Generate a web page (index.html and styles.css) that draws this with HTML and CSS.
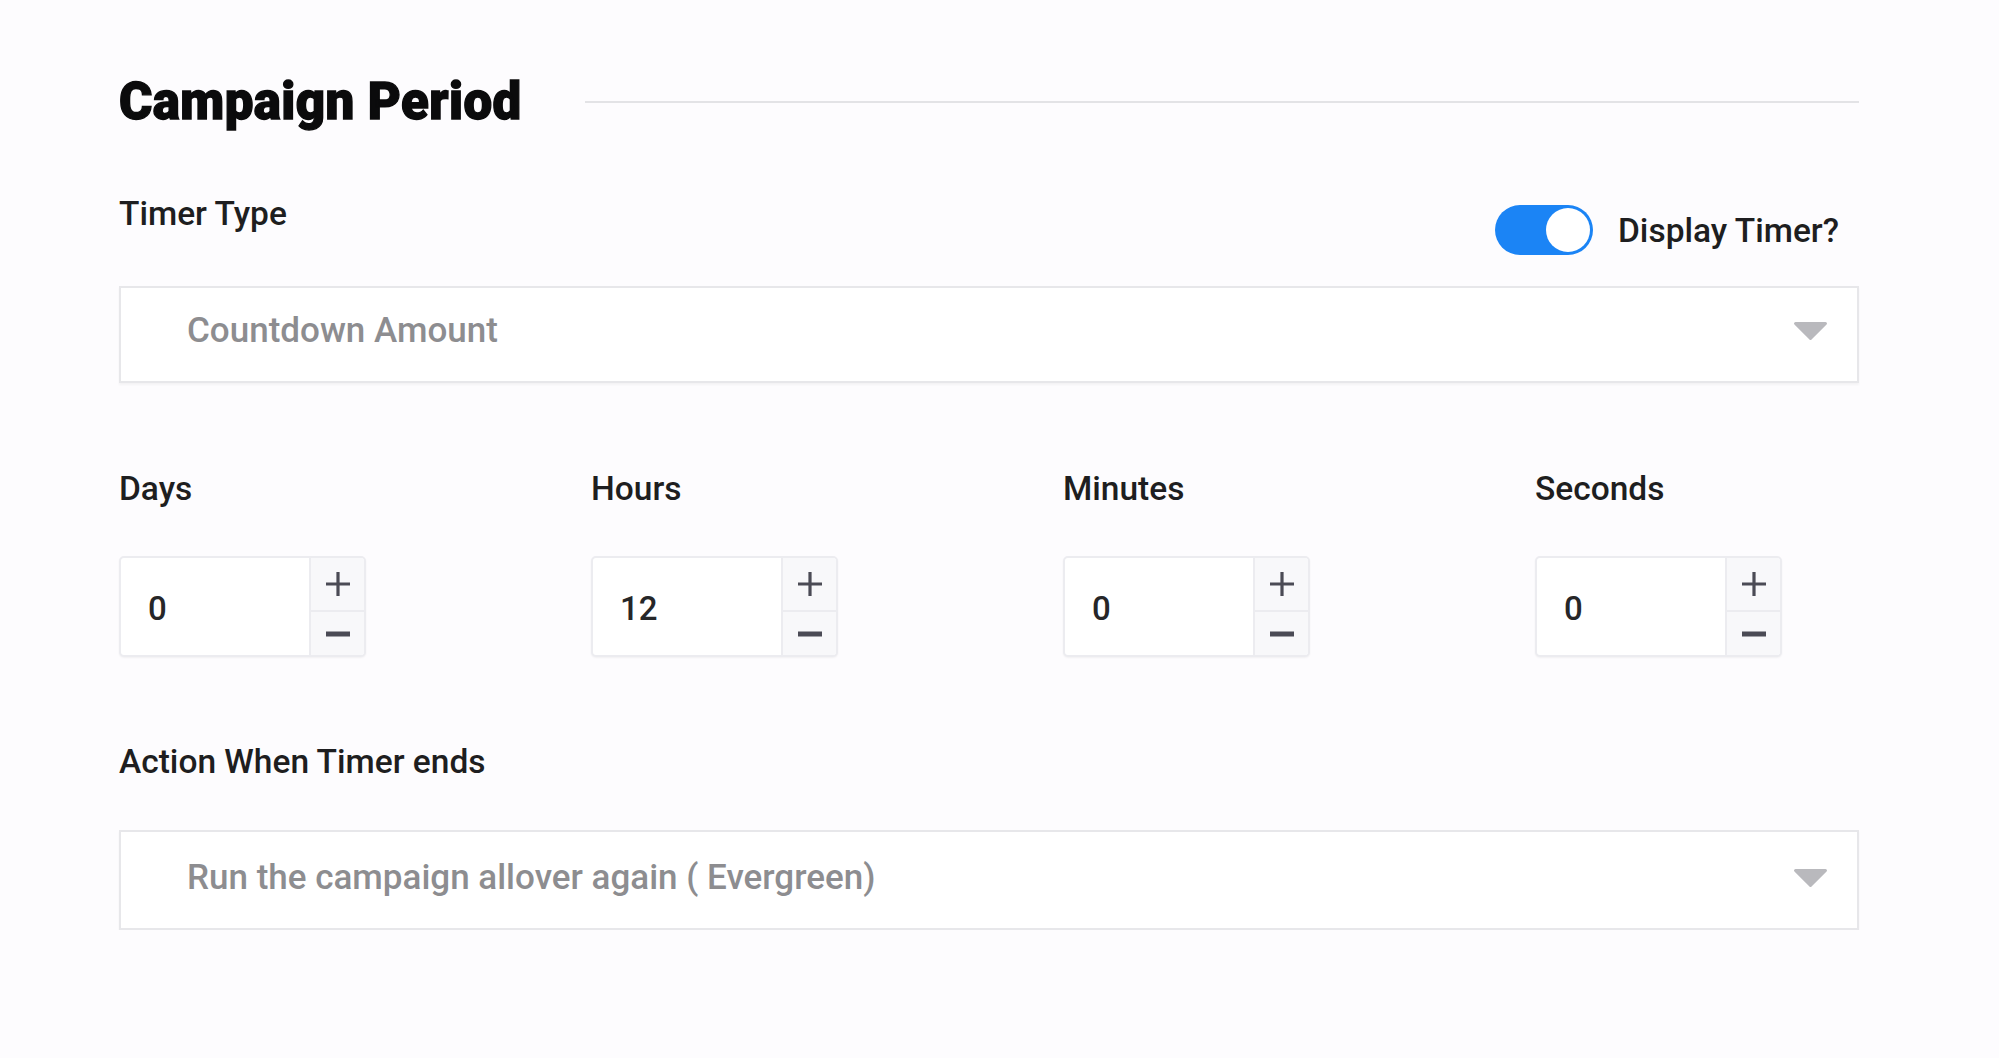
FILE: index.html
```html
<!DOCTYPE html>
<html lang="en">
<head>
    <meta charset="UTF-8">
    <meta name="viewport" content="width=device-width, initial-scale=1.0">
    <title>Campaign Period</title>
    <link rel="stylesheet" href="styles.css">
</head>
<body>
    <div class="campaign-section">
        <div class="section-header">
            <h2>Campaign Period</h2>
            <span class="header-line"></span>
        </div>

        <div class="timer-type-row">
            <label class="field-label">Timer Type</label>
            <label class="display-toggle">
                <span class="switch">
                    <input type="checkbox" checked>
                    <span class="slider"></span>
                </span>
                Display Timer?
            </label>
        </div>
        <div class="select-box">
            <span>Countdown Amount</span>
            <svg class="select-arrow" width="35" height="20" viewBox="0 0 35 20">
                <path d="M2.5 2.5 H32.5 L17.5 17.5 Z" fill="#b9b9bd" stroke="#b9b9bd" stroke-width="3" stroke-linejoin="round"/>
            </svg>
        </div>

        <div class="duration-grid">
            <div class="duration-field">
                <label class="field-label">Days</label>
                <div class="stepper">
                    <input type="text" value="0">
                    <div class="stepper-buttons">
                        <button type="button" class="step-up">
                            <svg width="26" height="26" viewBox="0 0 26 26"><path d="M13 1 V25 M1 13 H25" stroke="#4b4b55" stroke-width="3.2"/></svg>
                        </button>
                        <button type="button" class="step-down">
                            <svg width="26" height="8" viewBox="0 0 26 8"><path d="M1 4 H25" stroke="#4b4b55" stroke-width="5"/></svg>
                        </button>
                    </div>
                </div>
            </div>
            <div class="duration-field">
                <label class="field-label">Hours</label>
                <div class="stepper">
                    <input type="text" value="12">
                    <div class="stepper-buttons">
                        <button type="button" class="step-up">
                            <svg width="26" height="26" viewBox="0 0 26 26"><path d="M13 1 V25 M1 13 H25" stroke="#4b4b55" stroke-width="3.2"/></svg>
                        </button>
                        <button type="button" class="step-down">
                            <svg width="26" height="8" viewBox="0 0 26 8"><path d="M1 4 H25" stroke="#4b4b55" stroke-width="5"/></svg>
                        </button>
                    </div>
                </div>
            </div>
            <div class="duration-field">
                <label class="field-label">Minutes</label>
                <div class="stepper">
                    <input type="text" value="0">
                    <div class="stepper-buttons">
                        <button type="button" class="step-up">
                            <svg width="26" height="26" viewBox="0 0 26 26"><path d="M13 1 V25 M1 13 H25" stroke="#4b4b55" stroke-width="3.2"/></svg>
                        </button>
                        <button type="button" class="step-down">
                            <svg width="26" height="8" viewBox="0 0 26 8"><path d="M1 4 H25" stroke="#4b4b55" stroke-width="5"/></svg>
                        </button>
                    </div>
                </div>
            </div>
            <div class="duration-field">
                <label class="field-label">Seconds</label>
                <div class="stepper">
                    <input type="text" value="0">
                    <div class="stepper-buttons">
                        <button type="button" class="step-up">
                            <svg width="26" height="26" viewBox="0 0 26 26"><path d="M13 1 V25 M1 13 H25" stroke="#4b4b55" stroke-width="3.2"/></svg>
                        </button>
                        <button type="button" class="step-down">
                            <svg width="26" height="8" viewBox="0 0 26 8"><path d="M1 4 H25" stroke="#4b4b55" stroke-width="5"/></svg>
                        </button>
                    </div>
                </div>
            </div>
        </div>

        <label class="field-label action-label">Action When Timer ends</label>
        <div class="select-box select-box-tall">
            <span>Run the campaign allover again ( Evergreen)</span>
            <svg class="select-arrow" width="35" height="20" viewBox="0 0 35 20">
                <path d="M2.5 2.5 H32.5 L17.5 17.5 Z" fill="#b9b9bd" stroke="#b9b9bd" stroke-width="3" stroke-linejoin="round"/>
            </svg>
        </div>
    </div>
</body>
</html>
```

FILE: styles.css
```css
* {
    margin: 0;
    padding: 0;
    box-sizing: border-box;
    font-family: Roboto, 'Noto Sans', Arial, sans-serif;
}

body {
    background: #fdfcfe;
}

.campaign-section {
    width: 1740px;
    margin-left: 119px;
    padding-top: 72px;
}

/* Heading with the rule running to the right */
.section-header {
    display: flex;
    align-items: center;
    gap: 63px;
    height: 60px;
    margin-bottom: 63px;
}

.section-header h2 {
    font-size: 51px;
    font-weight: 900;
    line-height: 60px;
    color: #0b0b0c;
    -webkit-text-stroke: 1.3px #0b0b0c;
    letter-spacing: 0.4px;
    white-space: nowrap;
}

.header-line {
    flex: 1;
    height: 2px;
    background: #e3e3e6;
}

.field-label {
    display: block;
    font-size: 33.5px;
    font-weight: 500;
    line-height: 38px;
    color: #1e1e20;
}

.timer-type-row {
    display: flex;
    justify-content: space-between;
    align-items: flex-start;
    margin-bottom: 31px;
}

.display-toggle {
    display: flex;
    align-items: center;
    gap: 25px;
    margin-top: 10px;
    margin-right: 20px;
    font-size: 33.5px;
    font-weight: 500;
    color: #1e1e20;
    cursor: pointer;
}

/* Toggle switch */
.switch {
    position: relative;
    display: inline-block;
    width: 98px;
    height: 50px;
}

.switch input {
    opacity: 0;
    width: 0;
    height: 0;
}

.slider {
    position: absolute;
    inset: 0;
    background: #ccc;
    border-radius: 25px;
    transition: background-color 0.3s ease;
}

.slider::before {
    content: "";
    position: absolute;
    top: 3px;
    left: 3px;
    width: 44px;
    height: 44px;
    border-radius: 50%;
    background: #fff;
    transition: transform 0.3s ease;
}

.switch input:checked + .slider {
    background: #1b84f5;
}

.switch input:checked + .slider::before {
    transform: translateX(48px);
}

/* Dropdown boxes */
.select-box {
    display: flex;
    align-items: center;
    justify-content: space-between;
    height: 97px;
    padding: 0 29px 8px 66px;
    background: #fff;
    border: 2px solid #e7e7ea;
    box-shadow: 0 2px 2px rgba(0, 0, 0, 0.04);
    font-size: 35px;
    font-weight: 500;
    color: #8d8d90;
    cursor: pointer;
}

.select-box-tall {
    height: 100px;
    padding-bottom: 5px;
}

.select-arrow {
    display: block;
}

/* Days / Hours / Minutes / Seconds */
.duration-grid {
    display: grid;
    grid-template-columns: repeat(4, 324px);
    column-gap: 148px;
    margin-top: 87px;
}

.duration-field .field-label {
    margin-bottom: 48px;
}

.stepper {
    display: flex;
    width: 247px;
    height: 101px;
    background: #fff;
    border: 2px solid #ececf0;
    border-radius: 5px;
    box-shadow: 0 1px 2px rgba(0, 0, 0, 0.05);
    overflow: hidden;
}

.stepper input {
    width: 190px;
    border: none;
    border-right: 2px solid #ececf0;
    padding-left: 27px;
    padding-top: 3px;
    background: transparent;
    font-family: inherit;
    font-size: 33px;
    font-weight: 500;
    color: #262628;
    outline: none;
}

.stepper-buttons {
    flex: 1;
    display: flex;
    flex-direction: column;
    background: #f8f8fa;
}

.stepper-buttons button {
    display: flex;
    align-items: center;
    justify-content: center;
    border: none;
    background: transparent;
    cursor: pointer;
}

.stepper-buttons .step-up {
    height: 54px;
    border-bottom: 2px solid #ececf0;
}

.stepper-buttons .step-down {
    flex: 1;
}

.stepper-buttons svg {
    display: block;
}

.action-label {
    margin-top: 86px;
    margin-bottom: 49px;
}
```
